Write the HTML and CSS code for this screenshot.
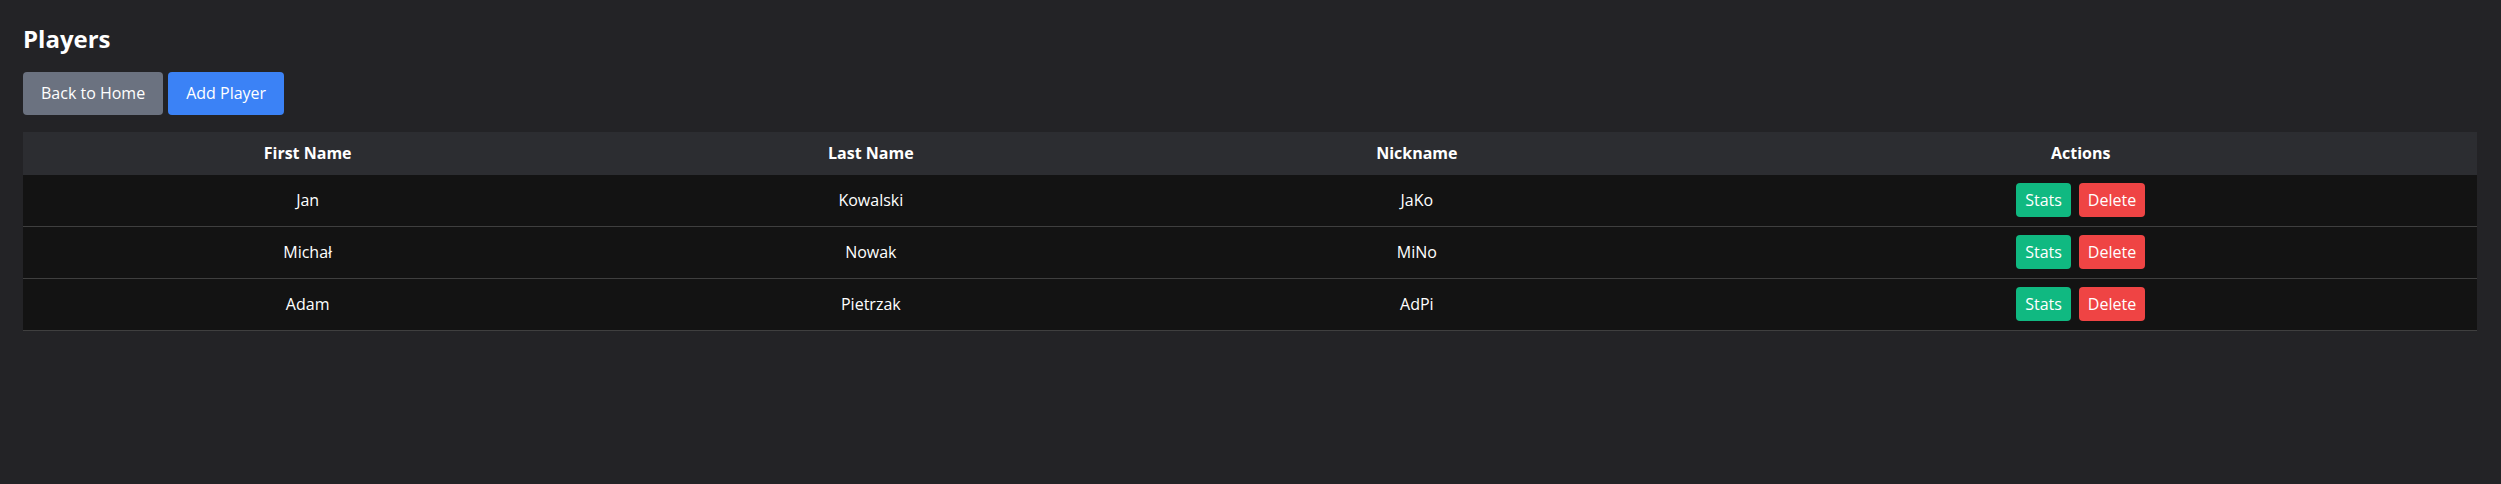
FILE: index.html
```html
<!DOCTYPE html>
<html lang="pl">
<head>
<meta charset="utf-8">
<title>Players</title>
<link rel="stylesheet" href="styles.css">
</head>
<body>
<main class="page">
  <h1 class="title">Players</h1>
  <div class="toolbar">
    <button class="btn btn-gray">Back to Home</button>
    <button class="btn btn-blue">Add Player</button>
  </div>
  <table class="players">
    <colgroup>
      <col class="col-first">
      <col class="col-last">
      <col class="col-nick">
      <col class="col-actions">
    </colgroup>
    <thead>
      <tr>
        <th>First Name</th>
        <th>Last Name</th>
        <th>Nickname</th>
        <th>Actions</th>
      </tr>
    </thead>
    <tbody>
      <tr>
        <td>Jan</td>
        <td>Kowalski</td>
        <td>JaKo</td>
        <td><div class="actions"><button class="sbtn sbtn-green">Stats</button><button class="sbtn sbtn-red">Delete</button></div></td>
      </tr>
      <tr>
        <td>Michał</td>
        <td>Nowak</td>
        <td>MiNo</td>
        <td><div class="actions"><button class="sbtn sbtn-green">Stats</button><button class="sbtn sbtn-red">Delete</button></div></td>
      </tr>
      <tr>
        <td>Adam</td>
        <td>Pietrzak</td>
        <td>AdPi</td>
        <td><div class="actions"><button class="sbtn sbtn-green">Stats</button><button class="sbtn sbtn-red">Delete</button></div></td>
      </tr>
    </tbody>
  </table>
</main>
</body>
</html>
```
FILE: styles.css
```css
html, body {
  margin: 0;
  padding: 0;
  background: #232326;
  color: #ffffff;
  font-family: "Open Sans", "Noto Sans", sans-serif;
  font-size: 16px;
}

.page {
  padding: 25px 24px 24px 23px;
}

.title {
  margin: 0 0 18px;
  font-size: 24px;
  line-height: 1.2;
  font-weight: 700;
}

.toolbar {
  display: flex;
  gap: 5px;
  margin-bottom: 17px;
}

.btn {
  font-family: inherit;
  font-size: 16px;
  line-height: 25px;
  padding: 9px 18px;
  border: none;
  border-radius: 4px;
  color: #ffffff;
  cursor: pointer;
}

.btn-gray { background: #6b7280; }
.btn-blue { background: #3b82f6; }

.players {
  width: 100%;
  border-collapse: collapse;
  table-layout: fixed;
}

.col-first { width: 23.2%; }
.col-last { width: 22.7%; }
.col-nick { width: 21.8%; }
.col-actions { width: 32.3%; }

.players th {
  background: #2c2d31;
  font-weight: 700;
  line-height: 24px;
  padding: 9.5px 12px;
  text-align: center;
}

.players td {
  background: #131313;
  line-height: 24px;
  padding: 8.5px 12px;
  text-align: center;
}

.players tbody tr {
  border-bottom: 1px solid #3f3f3f;
}

.actions {
  display: flex;
  justify-content: center;
  gap: 8px;
}

.sbtn {
  font-family: inherit;
  font-size: 16px;
  line-height: 24px;
  padding: 5px 9px;
  border: none;
  border-radius: 4px;
  color: #ffffff;
  cursor: pointer;
}

.sbtn-green { background: #10b981; }
.sbtn-red { background: #ef4444; }
```
